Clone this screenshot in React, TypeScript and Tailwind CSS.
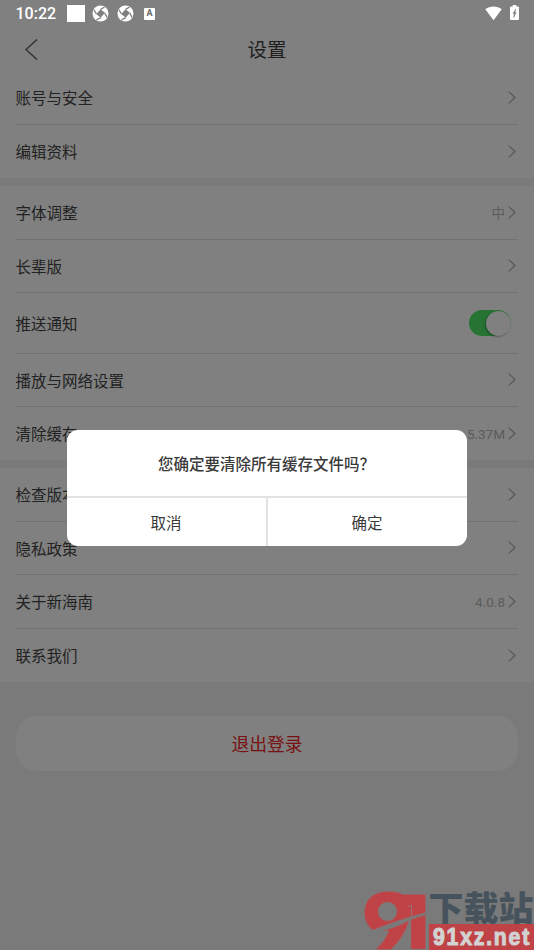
import React from 'react';
import clsx from 'clsx';

interface SettingItem {
  label: string;
  value?: string;
  toggle?: boolean;
  height: string;
}

const GROUPS: SettingItem[][] = [
  [
    { label: '账号与安全', height: 'h-[54px]' },
    { label: '编辑资料', height: 'h-[53px]' },
  ],
  [
    { label: '字体调整', value: '中', height: 'h-[54px]' },
    { label: '长辈版', height: 'h-[53px]' },
    { label: '推送通知', toggle: true, height: 'h-[61px]' },
    { label: '播放与网络设置', height: 'h-[53px]' },
    { label: '清除缓存', value: '5.37M', height: 'h-[53px]' },
  ],
  [
    { label: '检查版本', height: 'h-[54px]' },
    { label: '隐私政策', height: 'h-[53px]' },
    { label: '关于新海南', value: '4.0.8', height: 'h-[54px]' },
    { label: '联系我们', height: 'h-[53px]' },
  ],
];

const ShutterIcon = () => (
  <svg width="17" height="17" viewBox="0 0 17 17" fill="none">
    <circle cx="8.5" cy="8.5" r="8" fill="#fff" />
    <path d="M8.6 4.2 L12.8 7.8 L8.8 12.8 L4.2 9 Z" fill="#808080" />
    <path d="M8.6 4.4 L12.6 2 M12.6 7.8 L15 12.4 M8.8 12.6 L4.4 15 M4.4 9 L2 4.8" stroke="#808080" strokeWidth="1.3" />
  </svg>
);

const StatusBar = () => (
  <div className="flex h-[27px] items-center pl-[15.5px] pr-[15px]">
    <span className="w-[41.5px] whitespace-nowrap font-[Roboto] text-[16px] font-medium leading-none text-white">10:22</span>
    <div className="ml-[10px] h-[17px] w-[18px] bg-white" />
    <div className="ml-[7px]"><ShutterIcon /></div>
    <div className="ml-[8px]"><ShutterIcon /></div>
    <div className="ml-[10px] flex h-3 w-[11px] items-center justify-center rounded-[1px] bg-white font-[Roboto] text-[9px] font-bold leading-none text-[#666]">A</div>
    <svg className="ml-auto" width="17" height="15" viewBox="0 0 17 15">
      <path d="M0.3 3.2 C5 -0.4 12 -0.4 16.7 3.2 L8.5 14.3 Z" fill="#fff" />
    </svg>
    <svg className="ml-2 mt-[-2px]" width="9" height="15" viewBox="0 0 9 15">
      <path d="M2.7 0 H6.3 V1.4 H8 Q9 1.4 9 2.4 V14 Q9 15 8 15 H1 Q0 15 0 14 V2.4 Q0 1.4 1 1.4 H2.7 Z" fill="#fff" />
      <path d="M5.8 4 L3 8.4 H4.2 L3.7 12.4 L6.2 7.4 H4.9 Z" fill="#808080" stroke="#808080" strokeWidth="0.5" />
    </svg>
  </div>
);

const Chevron = () => (
  <svg width="8" height="13" viewBox="0 0 8 13" fill="none" className="-mt-px shrink-0">
    <path d="M0.7 0.6 L7 6.5 L0.7 12.4" stroke="#555" strokeWidth="1.1" />
  </svg>
);

const Toggle = () => (
  <div className="mr-[5px] flex h-[26px] w-[42px] justify-end rounded-full bg-[#267333] p-[0.5px]">
    <div className="size-[25px] rounded-full bg-[#808080] shadow-[-1px_1px_2px_rgba(0,0,0,0.3)]" />
  </div>
);

const SettingRow = ({ item, last }: { item: SettingItem; last: boolean }) => (
  <div className={clsx('mx-4 flex items-center', item.height, !last && 'border-b border-[#717171]')}>
    <span className="-ml-[0.5px] pt-[1px] text-[15.5px] leading-none text-[#222]">{item.label}</span>
    <div className="ml-auto flex items-center gap-[3px] pr-[2px]">
      {item.value && (
        <span className="pt-[3px] font-[Roboto,'Noto_Sans_CJK_SC',sans-serif] text-[13.5px] leading-none text-[#5c5c5c]">{item.value}</span>
      )}
      {item.toggle ? <Toggle /> : <Chevron />}
    </div>
  </div>
);

const ConfirmDialog = () => (
  <div className="absolute left-[67px] top-[430px] flex h-[116px] w-[400px] flex-col overflow-hidden rounded-[11px] bg-white text-[15.5px] leading-none text-[#3a3a3a]">
    <div className="flex h-[66px] items-center justify-center pr-px pt-[2px] font-medium">您确定要清除所有缓存文件吗？</div>
    <div className="flex flex-1 border-t-2 border-[#e3e3e3]">
      <button className="flex-1 border-r-2 border-[#e3e3e3] pr-px pt-[2px]">取消</button>
      <button className="flex-1 pr-px pt-[2px]">确定</button>
    </div>
  </div>
);

const Watermark = () => (
  <svg className="absolute bottom-0 right-0" width="172" height="80" viewBox="362 870 172 80">
    <g fill="#bf4346" stroke="#9c6667" strokeWidth="0.6">
      <path
        fillRule="evenodd"
        d="M373 930 C360 922 360 892 387 891.500 Q397 891 403 894.500 H425.500 V912.500 Q400 919 373 930 Z M387.500 902 A9.500 9.500 0 1 0 387.500 921 A9.500 9.500 0 1 0 387.500 902 Z"
      />
      <path d="M384 930.500 Q398 927 409 920.500 Q405 936 391 949.500 H376 Q385 941 389 931 Z" />
      <path d="M411 919.500 L425.500 915 V949 H411 Z" />
    </g>
    <path d="M408 906.500 L411.500 905.500 V917" fill="none" stroke="#947172" strokeWidth="1" />
    <text x="428.500" y="921" textLength="105" lengthAdjust="spacingAndGlyphs" fontFamily="'Noto Sans CJK SC', sans-serif" fontWeight="900" fontSize="34" fill="#46525c">下载站</text>
    <rect x="429" y="924" width="105" height="26" fill="#bf4346" />
    <text x="433" y="945" textLength="98" lengthAdjust="spacingAndGlyphs" fontFamily="'Liberation Sans', sans-serif" fontWeight="700" fontSize="24" letterSpacing="2" fill="#d2d2d2" stroke="#d2d2d2" strokeWidth="1.1">91xz.net</text>
  </svg>
);

const App: React.FC = () => {
  return (
    <div className="relative h-[950px] w-[534px] overflow-hidden bg-[#7a7a7a] font-['Noto_Sans_CJK_SC',sans-serif]">
      <div className="bg-[#808080]">
        <StatusBar />
        <header className="relative flex h-11 items-center justify-center">
          <svg className="absolute left-[25px] top-3" width="13" height="21" viewBox="0 0 13 21" fill="none">
            <path d="M12 0.5 L1 10.5 L12 20.5" stroke="#303030" strokeWidth="1.4" />
          </svg>
          <h1 className="text-[19.5px] leading-none text-[#1f1f1f]">设置</h1>
        </header>
      </div>

      <div className="flex flex-col gap-2">
        {GROUPS.map((group) => (
          <section key={group[0].label} className="bg-[#808080]">
            {group.map((item, i) => (
              <SettingRow key={item.label} item={item} last={i === group.length - 1} />
            ))}
          </section>
        ))}
      </div>

      <button className="mx-4 mt-[33.5px] flex h-[55px] w-[502px] items-center justify-center rounded-[21px] bg-[#808080] pt-[1px] text-[17.8px] leading-none text-[#781111]">
        退出登录
      </button>

      <ConfirmDialog />
      <Watermark />
    </div>
  );
};

export default App;
